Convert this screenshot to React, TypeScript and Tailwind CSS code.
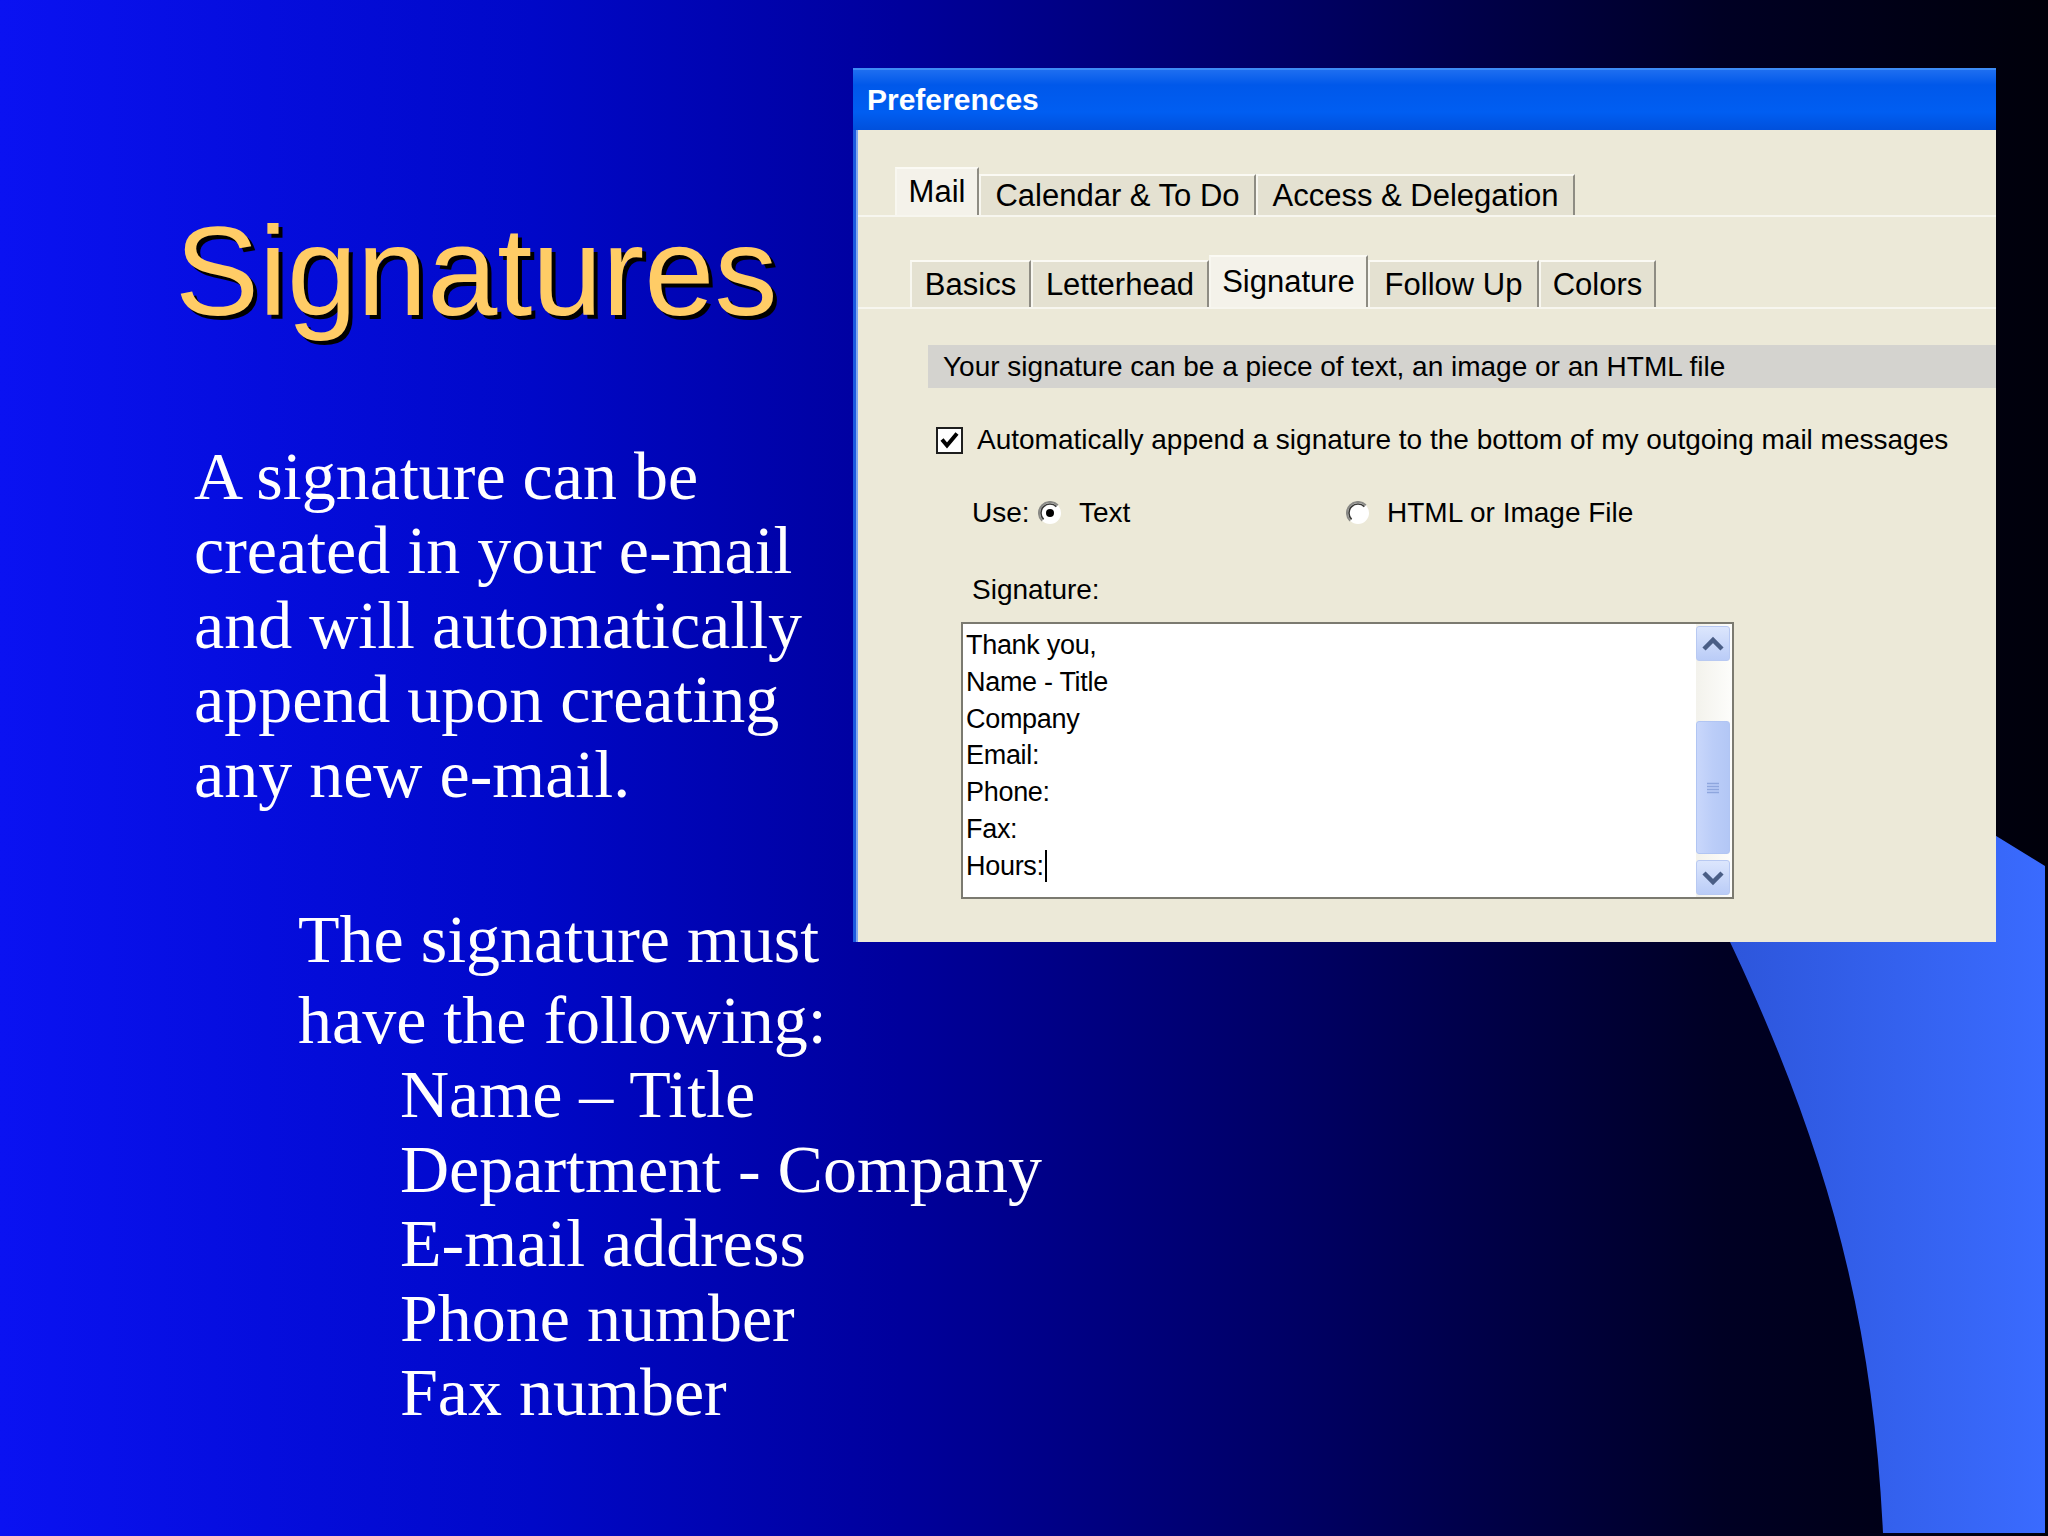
import React from "react";

function Tab({ label, w, selected }: { label: string; w: string; selected?: boolean }) {
  return (
    <div
      className={
        (selected
          ? "h-[48px] bg-[#F4F2EA] pb-[2px] "
          : "h-[41px] bg-[#E4E1D1] ") +
        w +
        " flex shrink-0 items-center justify-center border-t-2 border-l-2 border-r-2 border-t-[#FBFAF4] border-l-[#F8F7F0] border-r-[#8E8C83] text-[31px] leading-none text-black"
      }
    >
      {label}
    </div>
  );
}

function Tab2({ label, w, selected }: { label: string; w: string; selected?: boolean }) {
  return (
    <div
      className={
        (selected
          ? "h-[52px] bg-[#F4F2EA] pb-[2px] "
          : "h-[47px] bg-[#E4E1D1] ") +
        w +
        " flex shrink-0 items-center justify-center border-t-2 border-l-2 border-r-2 border-t-[#FBFAF4] border-l-[#F8F7F0] border-r-[#8E8C83] text-[31px] leading-none text-black"
      }
    >
      {label}
    </div>
  );
}

function Radio({ checked }: { checked?: boolean }) {
  return (
    <svg width="24" height="24" viewBox="0 0 24 24" className="shrink-0">
      <circle cx="12" cy="12" r="11" fill="#FFFFFF" />
      <path d="M4.2 19.8 A11 11 0 0 1 19.8 4.2" stroke="#8A8A86" strokeWidth="2" fill="none" />
      <path d="M5.6 18.4 A9 9 0 0 1 18.4 5.6" stroke="#3A3A38" strokeWidth="1.6" fill="none" />
      {checked && <circle cx="12" cy="12" r="4" fill="#000000" />}
    </svg>
  );
}

function Chevron({ up }: { up?: boolean }) {
  return (
    <svg width="22" height="16" viewBox="0 0 22 16">
      <path
        d={up ? "M2 13 L11 4 L20 13" : "M2 3 L11 12 L20 3"}
        stroke="#4A5E86"
        strokeWidth="4.5"
        fill="none"
        strokeLinejoin="miter"
      />
    </svg>
  );
}

export default function App() {
  const lines = ["Thank you,", "Name - Title", "Company", "Email:", "Phone:", "Fax:"];
  return (
    <div className="relative h-[1536px] w-[2048px] overflow-hidden bg-[linear-gradient(90deg,#0a12f2_0%,#0008c8_26%,#00009c_44%,#000062_64%,#000024_84%,#00000a_100%)]">
      <svg
        className="pointer-events-none absolute left-0 top-0"
        width="2048"
        height="1536"
        viewBox="0 0 2048 1536"
      >
        <defs>
          <linearGradient id="bl" x1="1700" y1="0" x2="2048" y2="0" gradientUnits="userSpaceOnUse">
            <stop offset="0" stopColor="#2C54D8" />
            <stop offset="1" stopColor="#3A6BFF" />
          </linearGradient>
        </defs>
        <path
          d="M1640 617 L2045 866 L2045 1533 L1883 1533 C1872 1300 1820 1120 1700 880 L1640 760 Z"
          fill="url(#bl)"
        />
      </svg>

      <div className="relative flex">
        {/* left column */}
        <div className="w-[853px] shrink-0 pl-[175px] pt-[209px] whitespace-nowrap">
          <h1 className="font-['Liberation_Sans',Arial,sans-serif] text-[126px] leading-[126px] text-[#FFCC66] [text-shadow:4px_4px_0_#000]">
            Signatures
          </h1>
          <div className="mt-[104px] pl-[19px] font-['Liberation_Serif','Times_New_Roman',serif] text-[68px] leading-[74.4px] text-white">
            <div>A signature can be</div>
            <div>created in your e-mail</div>
            <div>and will automatically</div>
            <div>append upon creating</div>
            <div>any new e-mail.</div>
          </div>
          <div className="mt-[91px] pl-[123px] font-['Liberation_Serif','Times_New_Roman',serif] text-[68px] leading-[74.5px] text-white">
            <div>The signature must</div>
            <div className="mt-[6px]">have the following:</div>
            <div className="pl-[102px]">
              <div>Name – Title</div>
              <div>Department - Company</div>
              <div>E-mail address</div>
              <div>Phone number</div>
              <div>Fax number</div>
            </div>
          </div>
        </div>

        {/* dialog */}
        <div className="mt-[68px] flex h-[874px] w-[1143px] shrink-0 flex-col overflow-hidden font-['Liberation_Sans',Arial,sans-serif]">
          <div className="flex h-[62px] shrink-0 items-center border-t-2 border-t-[#3D8CF6] bg-[linear-gradient(180deg,#1E6EF0_0%,#0058EA_25%,#005EF2_70%,#0050DC_100%)] pl-[14px]">
            <span className="text-[30px] font-bold leading-none text-white">Preferences</span>
          </div>
          <div className="flex flex-1 border-l-[3px] border-l-[#1A5AE0] bg-[#ECE9D8]">
            <div className="flex flex-1 flex-col border-l-2 border-l-[#7FA6F0]">
              {/* tab row 1 */}
              <div className="mt-[37px] flex h-[48px] items-end pl-[37px]">
                <Tab label="Mail" w="w-[84px]" selected />
                <Tab label="Calendar & To Do" w="w-[277px]" />
                <Tab label="Access & Delegation" w="w-[319px]" />
              </div>
              <div className="h-[2px] bg-[#F7F6EF]" />
              {/* tab row 2 */}
              <div className="mt-[38px] flex h-[52px] items-end pl-[52px]">
                <Tab2 label="Basics" w="w-[121px]" />
                <Tab2 label="Letterhead" w="w-[178px]" />
                <Tab2 label="Signature" w="w-[159px]" selected />
                <Tab2 label="Follow Up" w="w-[171px]" />
                <Tab2 label="Colors" w="w-[117px]" />
              </div>
              <div className="h-[2px] bg-[#F7F6EF]" />
              {/* grey band */}
              <div className="ml-[70px] mt-[36px] flex h-[43px] items-center bg-[#D4D3CF] pl-[15px] text-[28px] leading-none text-black">
                Your signature can be a piece of text, an image or an HTML file
              </div>
              {/* checkbox row */}
              <div className="ml-[78px] mt-[37px] flex h-[30px] items-center gap-[14px] text-[28px] leading-none text-black">
                <svg width="27" height="27" viewBox="0 0 27 27" className="shrink-0">
                  <rect x="1" y="1" width="25" height="25" fill="#FFFFFF" stroke="#1E1E1E" strokeWidth="2" />
                  <path d="M6 12.5 L11 18.5 L21 6.5" stroke="#000000" strokeWidth="4" fill="none" />
                </svg>
                <span className="whitespace-nowrap">
                  Automatically append a signature to the bottom of my outgoing mail messages
                </span>
              </div>
              {/* use row */}
              <div className="ml-[114px] mt-[43px] flex h-[30px] items-center text-[28px] leading-none text-black">
                <span className="w-[66px] shrink-0">Use:</span>
                <Radio checked />
                <span className="ml-[17px] w-[267px] shrink-0">Text</span>
                <Radio />
                <span className="ml-[17px] whitespace-nowrap">HTML or Image File</span>
              </div>
              {/* signature label */}
              <div className="ml-[114px] mt-[45px] flex h-[34px] items-center text-[28px] leading-none text-black">
                Signature:
              </div>
              {/* textarea */}
              <div className="ml-[103px] mt-[15px] flex h-[277px] w-[773px] border-2 border-[#7B7A70] bg-white">
                <div className="flex-1 pl-[3px] pt-[3px] text-[27px] leading-[36.8px] tracking-[-0.3px] text-black">
                  {lines.map((l) => (
                    <div key={l}>{l}</div>
                  ))}
                  <div className="flex items-center">
                    <span>Hours:</span>
                    <span className="ml-[1px] inline-block h-[32px] w-[2px] bg-black" />
                  </div>
                </div>
                <div className="flex w-[36px] shrink-0 flex-col bg-[linear-gradient(90deg,#F3F2EC,#FDFDFB)] py-[2px] pr-[2px]">
                  <div className="flex h-[35px] shrink-0 items-center justify-center rounded-[3px] border border-[#B8C9F2] bg-[linear-gradient(180deg,#DCE6FD,#BACCF7)]">
                    <Chevron up />
                  </div>
                  <div className="h-[60px] shrink-0" />
                  <div className="flex flex-1 items-center justify-center rounded-[3px] border border-[#B1C5F3] bg-[linear-gradient(90deg,#C9D7FB,#BBCDF8_50%,#B3C7F5)]">
                    <svg width="14" height="12" viewBox="0 0 14 12">
                      <path d="M1 1.5 H13 M1 4.5 H13 M1 7.5 H13 M1 10.5 H13" stroke="#8EA6DE" strokeWidth="1.5" />
                    </svg>
                  </div>
                  <div className="h-[6px] shrink-0" />
                  <div className="flex h-[35px] shrink-0 items-center justify-center rounded-[3px] border border-[#B8C9F2] bg-[linear-gradient(180deg,#DCE6FD,#BACCF7)]">
                    <Chevron />
                  </div>
                </div>
              </div>
            </div>
          </div>
        </div>
      </div>
    </div>
  );
}
